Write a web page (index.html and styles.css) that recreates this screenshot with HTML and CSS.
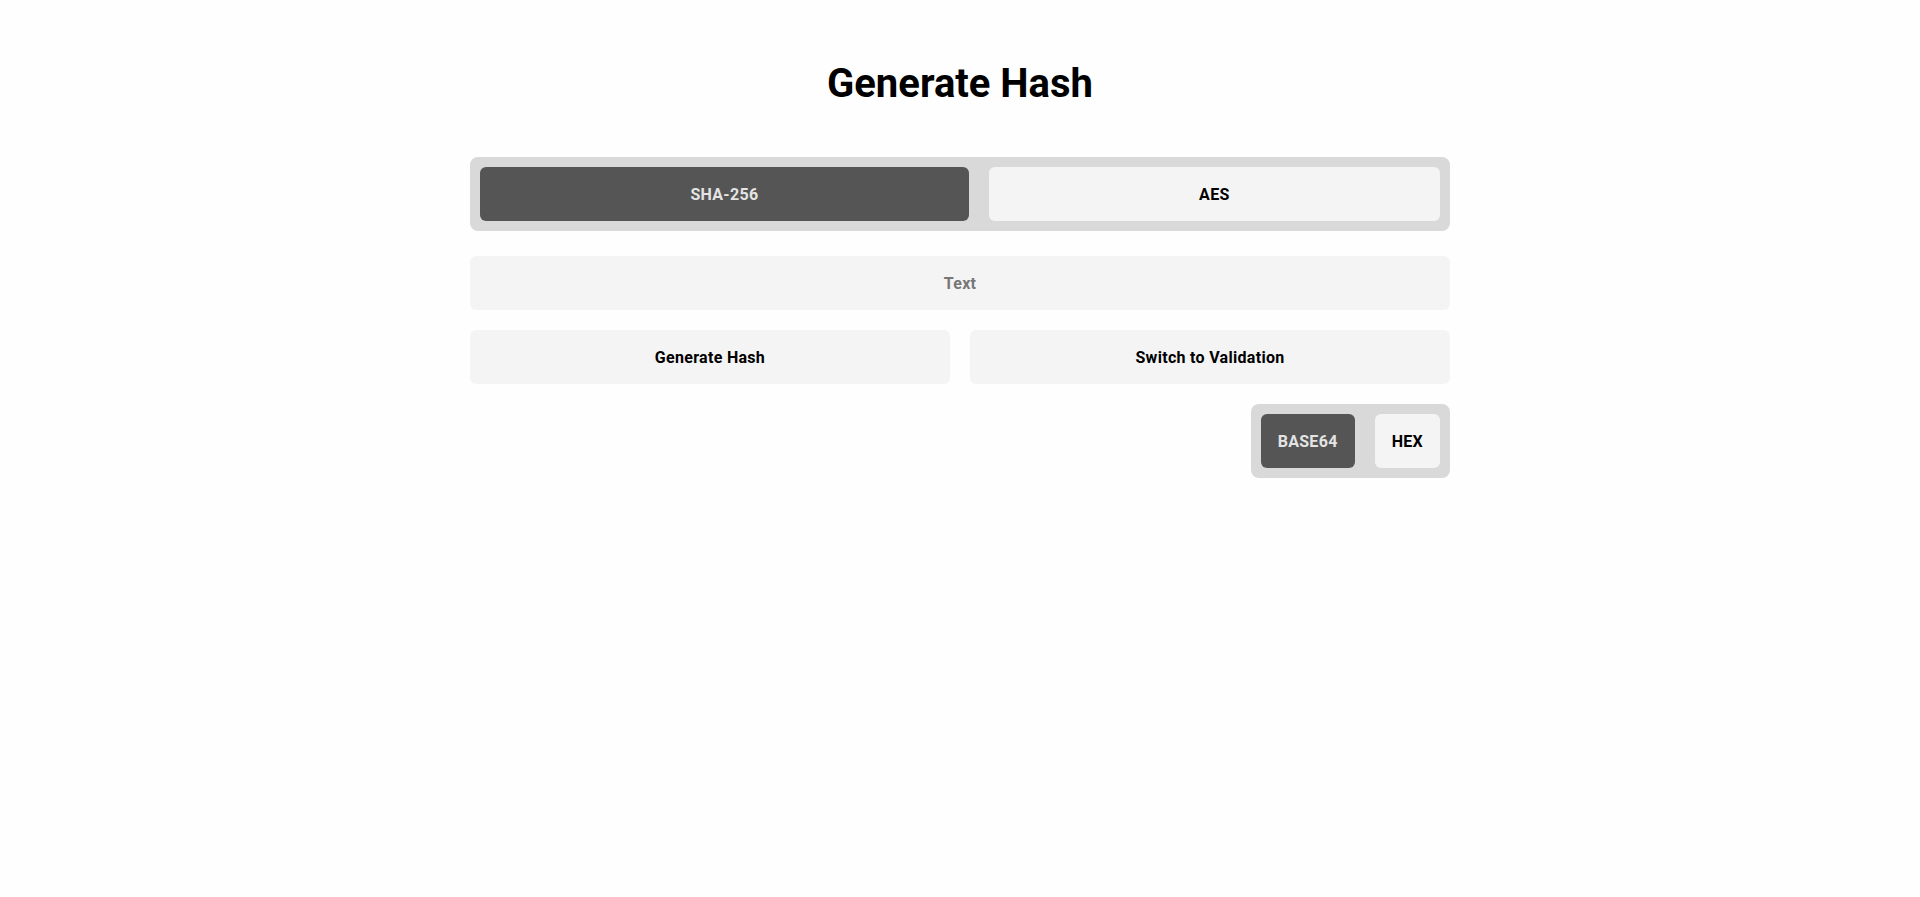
FILE: index.html
```html
<!DOCTYPE html>
<html lang="en">
<head>
<meta charset="utf-8">
<title>Generate Hash</title>
<link rel="stylesheet" href="styles.css">
</head>
<body>
<main class="page">
  <h1 class="title">Generate Hash</h1>
  <div class="segmented segmented-wide">
    <button class="seg-btn active">SHA-256</button>
    <button class="seg-btn">AES</button>
  </div>
  <input class="text-input" type="text" placeholder="Text">
  <div class="actions">
    <button class="action-btn">Generate Hash</button>
    <button class="action-btn">Switch to Validation</button>
  </div>
  <div class="format-row">
    <div class="segmented">
      <button class="seg-btn active">BASE64</button>
      <button class="seg-btn">HEX</button>
    </div>
  </div>
</main>
</body>
</html>
```
FILE: styles.css
```css
* { box-sizing: border-box; }
html, body { margin: 0; padding: 0; background: #fefefe; }
body { font-family: Roboto, "Liberation Sans", Arial, sans-serif; color: #000; }
.page {
  width: 980px;
  margin: 0 auto;
  padding-top: 60px;
  display: flex;
  flex-direction: column;
}
.title {
  margin: 0 0 50px;
  font-size: 40px;
  font-weight: 700;
  line-height: 47px;
  text-align: center;
}
.segmented {
  display: flex;
  gap: 20px;
  padding: 10px;
  background: #d9d9d9;
  border-radius: 8px;
}
.seg-btn, .action-btn {
  font-family: inherit;
  font-size: 16px;
  font-weight: 700;
  letter-spacing: 0.3px;
  height: 54px;
  padding: 0 17px;
  border: none;
  border-radius: 6px;
  background: #f4f4f4;
  color: #000;
  cursor: pointer;
}
.segmented-wide .seg-btn { flex: 1 1 auto; }
.seg-btn.active { background: #555555; color: #e4e4e4; }
.text-input {
  margin-top: 25px;
  height: 54px;
  border: none;
  border-radius: 6px;
  background: #f4f4f4;
  font-family: inherit;
  font-size: 16px;
  font-weight: 700;
  letter-spacing: 0.3px;
  text-align: center;
  outline: none;
}
.text-input::placeholder { color: #777; }
.actions {
  margin-top: 20px;
  display: grid;
  grid-template-columns: 1fr 1fr;
  gap: 20px;
}
.format-row {
  margin-top: 20px;
  display: flex;
  justify-content: flex-end;
}
```
